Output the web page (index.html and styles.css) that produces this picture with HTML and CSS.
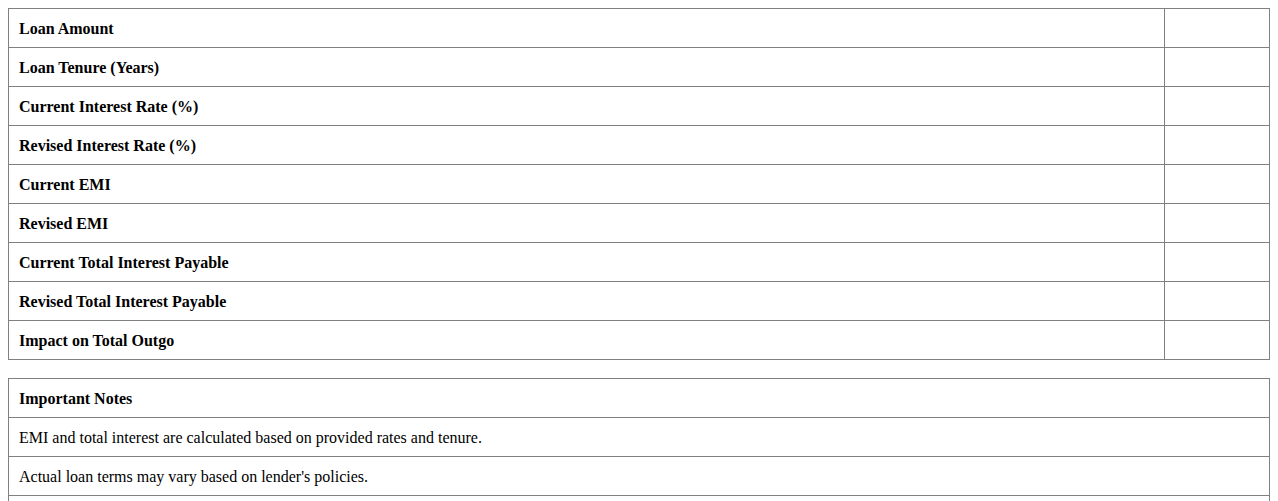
FILE: index.html
```html
<!DOCTYPE html>
<html>
<head>
<meta charset="utf-8">
<link rel="stylesheet" href="styles.css">
</head>
<body>
<table class="grid">
<tr><th class="label">Loan Amount</th><td class="value"></td></tr>
<tr><th class="label">Loan Tenure (Years)</th><td class="value"></td></tr>
<tr><th class="label">Current Interest Rate (%)</th><td class="value"></td></tr>
<tr><th class="label">Revised Interest Rate (%)</th><td class="value"></td></tr>
<tr><th class="label">Current EMI</th><td class="value"></td></tr>
<tr><th class="label">Revised EMI</th><td class="value"></td></tr>
<tr><th class="label">Current Total Interest Payable</th><td class="value"></td></tr>
<tr><th class="label">Revised Total Interest Payable</th><td class="value"></td></tr>
<tr><th class="label">Impact on Total Outgo</th><td class="value"></td></tr>
</table>
<table class="grid notes">
<tr><th class="label">Important Notes</th></tr>
<tr><td>EMI and total interest are calculated based on provided rates and tenure.</td></tr>
<tr><td>Actual loan terms may vary based on lender's policies.</td></tr>
<tr><td>Consult with your financial advisor before making decisions.</td></tr>
</table>
</body>
</html>
```
FILE: styles.css
```css
body {
  margin: 8px;
  font-family: "Liberation Serif", "Times New Roman", serif;
  font-size: 16px;
  color: #000;
  background: #fff;
}
.grid {
  width: 100%;
  border-collapse: collapse;
  margin-bottom: 18px;
}
.grid th, .grid td {
  border: 1px solid #808080;
  padding: 11px 10px 9px;
  text-align: left;
  height: 18px;
  line-height: 18px;
}
.grid th {
  font-weight: bold;
}
.value {
  width: 84px;
}
```
